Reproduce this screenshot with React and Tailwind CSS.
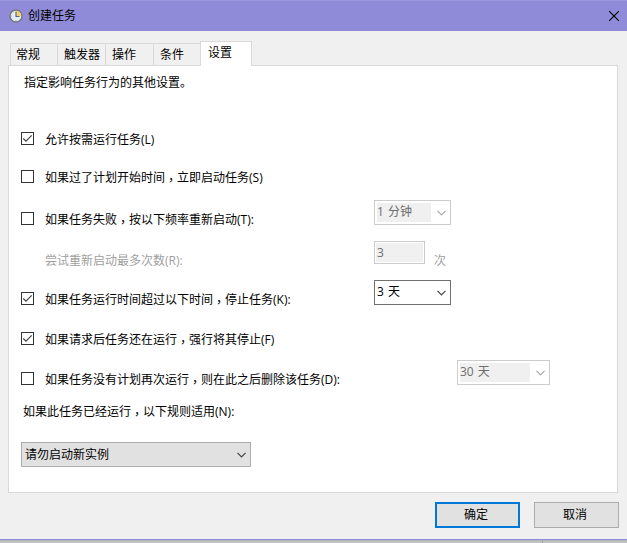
const TABS = ['常规', '触发器', '操作', '条件'];

// Fullwidth commas sit centred in their cell (TC face), lowered to the baseline.
function Text({ children, className = '' }) {
  const parts = children.split('，');
  return (
    <span className={`whitespace-nowrap ${className}`}>
      {parts.map((part, i) => (
        <span key={i}>
          {i > 0 && <span className="relative top-[3px] font-['Noto_Sans_CJK_TC',sans-serif]">，</span>}
          {part}
        </span>
      ))}
    </span>
  );
}

function Chevron({ className = '' }) {
  return (
    <svg viewBox="0 0 9 6" fill="none" stroke="currentColor" strokeWidth="1.2" className={`h-[6px] w-[9px] flex-none ${className}`}>
      <path d="M.5 .8l4 4 4-4" />
    </svg>
  );
}

function Checkbox({ checked }) {
  return (
    <span className="flex h-[13px] w-[13px] flex-none border border-[#333] bg-white">
      {checked && (
        <svg viewBox="0 0 11 11" fill="none" stroke="#444" strokeWidth="1.2" className="h-[11px] w-[11px]">
          <path d="M1.3 5.5l2.7 2.7 5.7-5.9" />
        </svg>
      )}
    </span>
  );
}

function Option({ checked, label }) {
  return (
    <div className="flex h-[13px] items-center gap-[11px]">
      <Checkbox checked={checked} />
      <Text className="relative top-px">{label}</Text>
    </div>
  );
}

function ComboBox({ value, disabled, className = '' }) {
  return (
    <div
      className={`flex h-[25px] items-center justify-between border bg-white p-[2px] pr-[4px] ${
        disabled ? 'border-[#ccc] text-[#6d6d6d]' : 'border-[#707070] text-black'
      } ${className}`}
    >
      <span className={`flex h-[19px] flex-1 items-center ${disabled ? 'mr-[6px] bg-[#f0f0f0]' : 'mr-[7px]'}`}>
        <Text className="relative -top-px [word-spacing:1px]">{value}</Text>
      </span>
      <Chevron className={disabled ? 'text-[#aaa]' : 'text-[#444]'} />
    </div>
  );
}

function ClockIcon() {
  return (
    <svg viewBox="0 0 14 14" className="h-[14px] w-[14px] flex-none">
      <circle cx="7" cy="7" r="6" fill="#e4eef2" stroke="#77777c" strokeWidth="1.4" />
      <path d="M7 7V1.8A5.2 5.2 0 0 1 12.2 7z" fill="#f3cf78" />
      <path d="M7 2.8v4.7h3.5" fill="none" stroke="#52636e" strokeWidth="1.1" />
      <path d="M7 11.2v1M2 7h1" stroke="#8a9ba4" strokeWidth=".8" />
    </svg>
  );
}

export default function App() {
  return (
    <div className="flex h-[543px] w-[627px] flex-col overflow-hidden bg-[#f0f0f0] font-['Open_Sans','Noto_Sans_CJK_SC',sans-serif] text-[12px] leading-[16px] text-black">
      <header className="flex h-[31px] flex-none items-center border-t border-[#9a95dd] bg-[#8f8bd8] pr-[8px] pl-[9px]">
        <ClockIcon />
        <span className="ml-[5px] flex-1">创建任务</span>
        <svg viewBox="0 0 10 10" stroke="#000" strokeWidth="1.1" className="h-[10px] w-[10px]">
          <path d="M0 0l10 10M10 0L0 10" />
        </svg>
      </header>

      <nav className="z-10 mt-[10px] -mb-px ml-[10px] flex h-[25px] flex-none items-end">
        {TABS.map((tab) => (
          <div key={tab} className="mb-px flex h-[22px] w-[48px] flex-none items-center border-t border-l border-[#d9d9d9] pl-[6px] first:w-[47px] first:pl-[5px]">
            <Text>{tab}</Text>
          </div>
        ))}
        <div className="-ml-px flex h-[25px] w-[52px] items-start border border-b-0 border-[#d9d9d9] bg-white pt-[3px] pl-[7px]">
          <Text>设置</Text>
        </div>
      </nav>

      <main className="ml-[8px] flex h-[428px] w-[610px] flex-none flex-col border border-[#d9d9d9] bg-white pl-[12px]">
        <Text className="mt-[9px] ml-[3px] h-[16px]">指定影响任务行为的其他设置。</Text>
        <div className="mt-[41px] flex flex-col gap-[25px]">
          <Option checked label="允许按需运行任务(L)" />
          <Option label="如果过了计划开始时间，立即启动任务(S)" />
        </div>

        <div className="mt-[17px] flex h-[25px]">
          <div className="w-[353px] pt-[12px]">
            <Option label="如果任务失败，按以下频率重新启动(T):" />
          </div>
          <ComboBox value="1 分钟" disabled className="w-[77px]" />
        </div>

        <div className="mt-[16px] flex h-[23px]">
          <Text className="w-[353px] pt-[12px] pl-[24px] text-[#a0a0a0]">尝试重新启动最多次数(R):</Text>
          <div className="h-[23px] w-[51px] border border-[#ccc] p-px">
            <div className="flex h-[19px] items-center bg-[#f0f0f0] pl-px text-[#6d6d6d]">3</div>
          </div>
          <Text className="ml-[9px] pt-[12px] text-[#a0a0a0]">次</Text>
        </div>

        <div className="mt-[16px] flex h-[25px]">
          <div className="w-[353px] pt-[12px]">
            <Option checked label="如果任务运行时间超过以下时间，停止任务(K):" />
          </div>
          <ComboBox value="3 天" className="w-[77px]" />
        </div>

        <div className="mt-[27px]">
          <Option checked label="如果请求后任务还在运行，强行将其停止(F)" />
        </div>

        <div className="mt-[15px] flex h-[25px]">
          <div className="w-[436px] pt-[12px]">
            <Option label="如果任务没有计划再次运行，则在此之后删除该任务(D):" />
          </div>
          <ComboBox value="30 天" disabled className="w-[93px]" />
        </div>

        <Text className="mt-[18px] ml-[2px] h-[16px]">如果此任务已经运行，以下规则适用(N):</Text>
        <div className="mt-[23px] flex h-[25px] w-[230px] items-center justify-between border border-[#adadad] bg-[#e1e1e1] pr-[4px] pl-[3px]">
          <Text>请勿启动新实例</Text>
          <Chevron className="text-[#444]" />
        </div>
      </main>

      <footer className="flex h-[46px] flex-none justify-end gap-[14px] pt-[9px] pr-[8px]">
        <button className="h-[26px] w-[85px] border-2 border-[#0078d7] bg-[#e1e1e1] pr-[3px]">确定</button>
        <button className="h-[26px] w-[85px] border border-[#adadad] bg-[#e1e1e1] pr-[3px]">取消</button>
      </footer>
      <div className="flex h-[4px] flex-none border-t border-[#8f8bd8] bg-linear-to-b from-[#b4b4b4] to-[#c8c8c8]">
        <span className="ml-[542px] w-px bg-[#a5a5a5]" />
      </div>
    </div>
  );
}
